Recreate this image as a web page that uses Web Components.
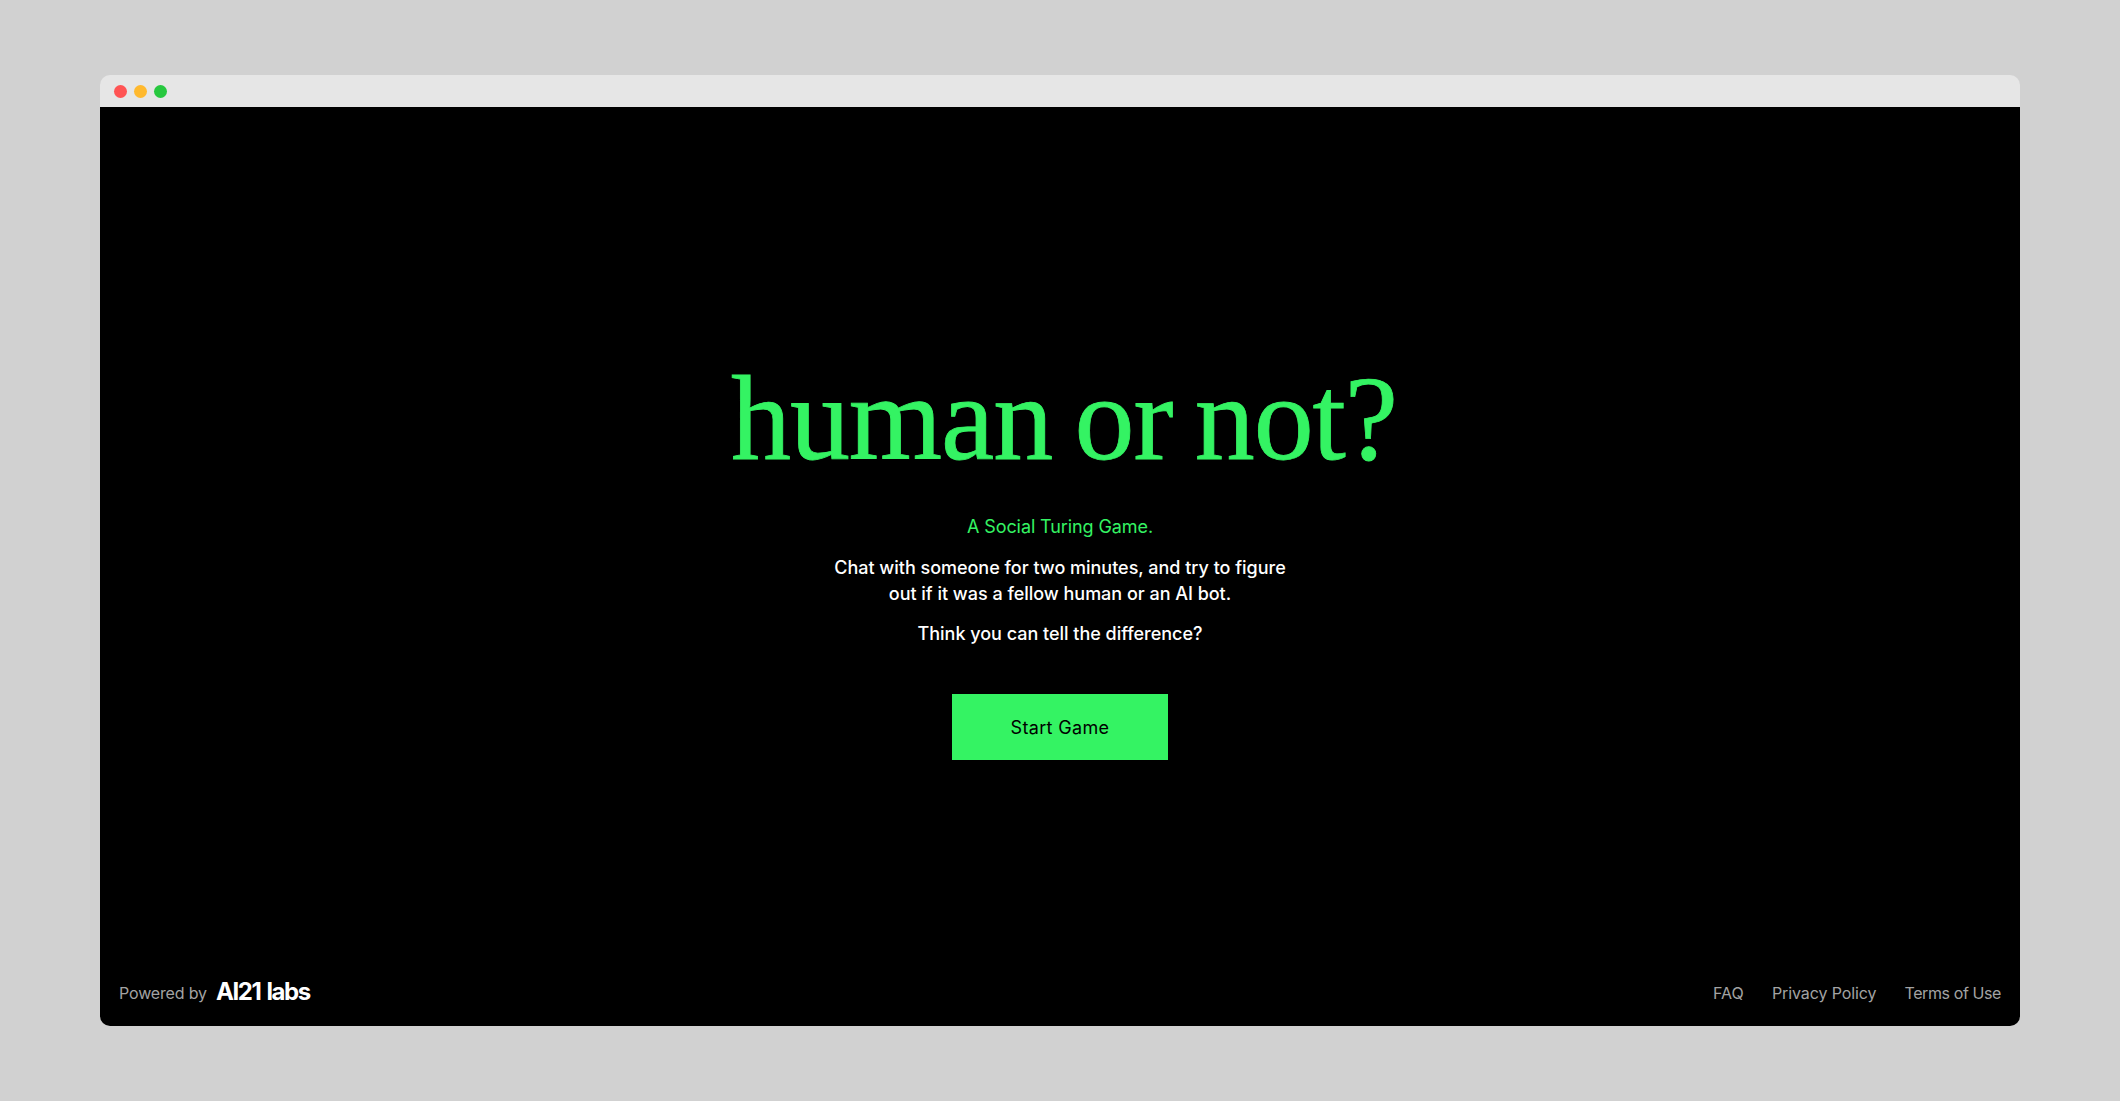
<!DOCTYPE html>
<html lang="en"><head><meta charset="utf-8"><title>human or not?</title>
<style>html,body{margin:0;height:100%;background:#d1d1d1}body{display:block;overflow:hidden}</style>
</head><body>
<browser-window>
  <game-intro></game-intro>
  <site-footer></site-footer>
</browser-window>
<script>
class BrowserWindow extends HTMLElement{constructor(){super();this.attachShadow({mode:'open'}).innerHTML=`<style>
:host{display:flex;flex-direction:column;width:1920px;height:951px;margin:75px 100px 0;border-radius:10px;overflow:hidden}
.bar{height:32px;flex:none;background:#e6e6e6;display:flex;align-items:center;gap:7px;padding:1px 14px 0;box-sizing:border-box}
.dot{width:13px;height:13px;border-radius:50%}
.content{flex:1;display:flex;flex-direction:column;justify-content:space-between;min-height:0;background:#000}
</style><div class="bar"><span class="dot" style="background:#ff5454"></span><span class="dot" style="background:#ffb92e"></span><span class="dot" style="background:#27c83f"></span></div><div class="content"><slot></slot></div>`}}
class GameIntro extends HTMLElement{constructor(){super();this.attachShadow({mode:'open'}).innerHTML=`<style>
:host{display:flex;flex-direction:column;align-items:center;padding-top:251px;font:500 18px/26px Inter,"Noto Sans",sans-serif;letter-spacing:-.02px;color:#fff;text-align:center}
h1{margin:0 0 0 8px;font:400 120px/122px "Liberation Serif",serif;letter-spacing:-1.1px;word-spacing:-6.5px;color:#34f363;-webkit-text-stroke:.8px #34f363}
p{margin:0}
.tag{color:#34f363;font-weight:400;margin-top:34px;letter-spacing:-.1px}
.body{margin-top:15px;width:480px}
.q{margin-top:14px}
button{margin-top:47px;width:216px;height:66px;border:0;border-radius:0;background:#34f363;color:#000;font:400 18px Inter,"Noto Sans",sans-serif;letter-spacing:.35px;padding:0}
</style><h1>human or not?</h1><p class="tag">A Social Turing Game.</p><p class="body">Chat with someone for two minutes, and try to figure out if it was a fellow human or an AI bot.</p><p class="q">Think you can tell the difference?</p><button>Start Game</button>`}}
class SiteFooter extends HTMLElement{constructor(){super();this.attachShadow({mode:'open'}).innerHTML=`<style>
:host{display:flex;justify-content:space-between;align-items:center;padding:0 19px 22px 19px;font:400 16px/22px Inter,"Noto Sans",sans-serif;color:#a3a3a3}
.left{display:flex;align-items:center;gap:9px}
.left>span:first-child{letter-spacing:-.15px}
.logo{font:700 24px/22px Inter,sans-serif;color:#fff;letter-spacing:-1.4px;display:inline-flex;gap:6px;position:relative;top:-1px}
nav{display:flex;gap:28px}
.faq{letter-spacing:.1px}.pp{letter-spacing:-.1px}.tu{letter-spacing:-.4px}
</style><div class="left"><span>Powered by</span><span class="logo"><span>AI21</span><span>labs</span></span></div><nav><span class="faq">FAQ</span><span class="pp">Privacy Policy</span><span class="tu">Terms of Use</span></nav>`}}
customElements.define('browser-window',BrowserWindow);
customElements.define('game-intro',GameIntro);
customElements.define('site-footer',SiteFooter);
</script>
</body></html>
